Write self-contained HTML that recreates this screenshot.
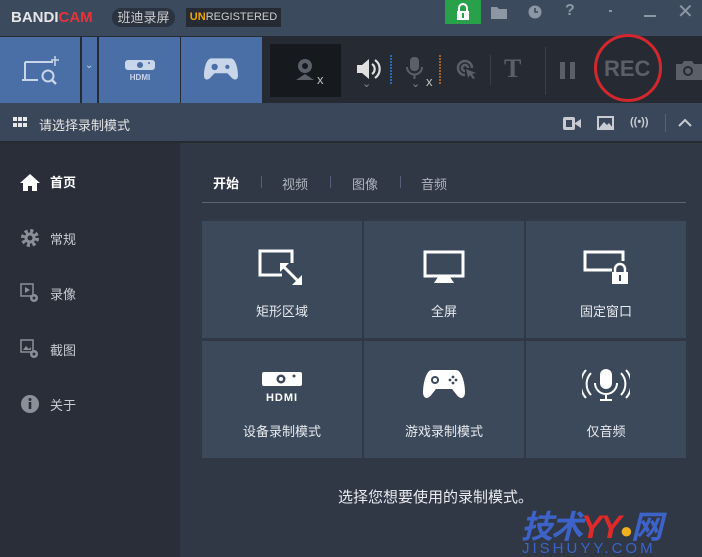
<!DOCTYPE html>
<html><head><meta charset="utf-8"><style>
*{margin:0;padding:0;box-sizing:border-box}
body{width:702px;height:557px;overflow:hidden;background:#303745;font-family:"Liberation Sans","Noto Sans CJK SC",sans-serif;position:relative;color:#fff}
.a{position:absolute}
.tile{position:absolute;background:#3c495b;width:160px;height:117px;text-align:center;font-size:13px;color:#e8ebef}
.tile svg{position:absolute;left:50%;transform:translateX(-50%);top:28px}
.tile span{position:absolute;left:0;right:0;top:80px}
.nav{position:absolute;left:20px;font-size:13px;color:#c8ccd2;display:flex;align-items:center}
.nav svg{margin-right:10px}
</style></head><body>
<div class="a" style="left:0;top:0;width:702px;height:36px;background:#3c4a5e"></div>
<div class="a" style="left:11px;top:9px;font-weight:bold;font-size:15px;color:#e6e6e6">BANDI<span style="color:#e8333a">CAM</span></div>
<div class="a" style="left:112px;top:8px;width:63px;height:19px;border-radius:9px;background:#2c3340;color:#ccc;font-size:13px;text-align:center;line-height:19px">班迪录屏</div>
<div class="a" style="left:186px;top:8px;width:95px;height:19px;background:#262b33;font-size:11px;line-height:19px;text-align:center;color:#ccc"><b style="color:#f0a500">UN</b>REGISTERED</div>
<div class="a" style="left:445px;top:0;width:36px;height:24px;background:#28a14a"></div>
<svg class="a" style="left:454px;top:3px" width="18" height="18" viewBox="0 0 18 18"><path d="M5 8V5a4 4 0 0 1 8 0v3" stroke="#fff" stroke-width="2" fill="none"/><rect x="3" y="8" width="12" height="9" fill="#fff"/><rect x="8" y="10" width="2" height="5" fill="#28a14a"/></svg>
<svg class="a" style="left:491px;top:6px" width="16" height="13"><path d="M0 1h6l2 2h8v10H0z" fill="#8d96a3"/></svg>
<svg class="a" style="left:528px;top:5px" width="14" height="14"><circle cx="7" cy="7" r="6.5" fill="#8d96a3"/><path d="M7 3v4h3" stroke="#3c4a5e" stroke-width="1.6" fill="none"/></svg>
<div class="a" style="left:565px;top:2px;font-size:16px;color:#8d96a3;font-weight:bold">?</div>
<div class="a" style="left:609px;top:10px;width:3px;height:2px;background:#8d96a3"></div>
<div class="a" style="left:644px;top:15px;width:12px;height:2px;background:#8d96a3"></div>
<div class="a" style="left:677px;top:-1px;font-size:20px;color:#8d96a3">✕</div>
<div class="a" style="left:0;top:36px;width:702px;height:67px;background:#262b33"></div>
<div class="a" style="left:0;top:37px;width:80px;height:66px;background:#4a6ea6"></div>
<div class="a" style="left:82px;top:37px;width:15px;height:66px;background:#4a6ea6"></div>
<div class="a" style="left:99px;top:37px;width:81px;height:66px;background:#4a6ea6"></div>
<div class="a" style="left:181px;top:37px;width:81px;height:66px;background:#4a6ea6"></div>
<svg class="a" style="left:22px;top:56px" width="38" height="30" viewBox="0 0 38 30"><path d="M3 6h28M3 6v18M0 24h16" stroke="#c9d5e8" stroke-width="2" fill="none"/><path d="M33 0v10M29 4h8" stroke="#c9d5e8" stroke-width="1.5"/><circle cx="26" cy="20" r="5.5" stroke="#c9d5e8" stroke-width="2" fill="none"/><path d="M30 24l4 4" stroke="#c9d5e8" stroke-width="2.5"/></svg>
<div class="a" style="left:85px;top:60px;color:#c9d5e8;font-size:10px">⌄</div>
<svg class="a" style="left:124px;top:59px" width="32" height="22"><rect x="1" y="1" width="30" height="10" rx="3" fill="#c9d5e8"/><circle cx="16" cy="6" r="3" fill="#4a6ea6"/><circle cx="25" cy="4" r="1" fill="#4a6ea6"/><text x="16" y="21" font-size="8" font-weight="bold" text-anchor="middle" fill="#c9d5e8" font-family="Liberation Sans">HDMI</text></svg>
<svg class="a" style="left:204px;top:57px" width="34" height="24" viewBox="0 0 32 22"><path d="M7 1h18c5 0 7 10 7 16 0 5-4 5-7 1l-3-3H10l-3 3c-3 4-7 4-7-1C0 11 2 1 7 1z" fill="#c9d5e8"/><circle cx="10" cy="9" r="3" fill="#4a6ea6"/><circle cx="22" cy="9" r="2" fill="#4a6ea6"/></svg>
<div class="a" style="left:270px;top:44px;width:71px;height:53px;background:#16191e"></div>
<svg class="a" style="left:293px;top:56px" width="40" height="30"><circle cx="12" cy="10" r="7" fill="#5b6068"/><circle cx="12" cy="10" r="3" fill="#16191e"/><path d="M3 24l9-6 9 6z" fill="#5b6068"/><text x="24" y="28" font-size="13" fill="#c0c0c0" font-family="Liberation Sans">x</text></svg>
<svg class="a" style="left:356px;top:57px" width="26" height="24"><path d="M1 8h5l7-6v20l-7-6H1z" fill="#e0e0e0"/><path d="M16 7a6 6 0 0 1 0 10M19 3a11 11 0 0 1 0 18" stroke="#e0e0e0" stroke-width="2.2" fill="none"/></svg>
<div class="a" style="left:362px;top:77px;color:#888;font-size:11px">⌄</div>
<div class="a" style="left:390px;top:55px;width:2px;height:30px;background:repeating-linear-gradient(#2a6ab0 0 2px,transparent 2px 3px)"></div>
<svg class="a" style="left:405px;top:57px" width="36" height="30"><rect x="5" y="0" width="9" height="14" rx="4" fill="#5b6068"/><path d="M2 10a7.5 7.5 0 0 0 15 0M9.5 18v4" stroke="#5b6068" stroke-width="2" fill="none"/><text x="21" y="29" font-size="13" fill="#c0c0c0" font-family="Liberation Sans">x</text></svg>
<div class="a" style="left:411px;top:77px;color:#888;font-size:11px">⌄</div>
<div class="a" style="left:439px;top:55px;width:2px;height:30px;background:repeating-linear-gradient(#a0602a 0 2px,transparent 2px 3px)"></div>
<svg class="a" style="left:456px;top:59px" width="22" height="22"><path d="M9 16A7 7 0 1 1 16 9M9 12a3 3 0 1 1 3-3" stroke="#5b6068" stroke-width="2.5" fill="none"/><path d="M10 10l10 4-4 1 3 4-2 1-3-4-2 3z" fill="#5b6068"/></svg>
<div class="a" style="left:490px;top:55px;width:1px;height:30px;background:#3a3f47"></div>
<div class="a" style="left:504px;top:54px;font-family:'Liberation Serif',serif;font-weight:bold;font-size:26px;color:#5b6068">T</div>
<div class="a" style="left:545px;top:47px;width:1px;height:48px;background:#3a3f47"></div>
<div class="a" style="left:560px;top:62px;width:5px;height:17px;background:#5b6068"></div>
<div class="a" style="left:570px;top:62px;width:5px;height:17px;background:#5b6068"></div>
<div class="a" style="left:594px;top:34px;width:68px;height:68px;border:3px solid #d2282d;border-radius:50%"></div>
<div class="a" style="left:604px;top:56px;font-weight:bold;font-size:22px;color:#5b6068">REC</div>
<svg class="a" style="left:676px;top:60px" width="26" height="20"><path d="M0 4h6l2-3h8l2 3h8v16H0z" fill="#5b6068"/><circle cx="12" cy="11" r="5" fill="#262b33"/><circle cx="12" cy="11" r="3" fill="#5b6068"/></svg>
<div class="a" style="left:0;top:103px;width:702px;height:38px;background:#3a4659"></div>
<svg class="a" style="left:13px;top:117px" width="15" height="11"><g fill="#e8e8e8"><rect x="0" y="0" width="4" height="4"/><rect x="5" y="0" width="4" height="4"/><rect x="10" y="0" width="4" height="4"/><rect x="0" y="6" width="4" height="4"/><rect x="5" y="6" width="4" height="4"/><rect x="10" y="6" width="4" height="4"/></g></svg>
<div class="a" style="left:39px;top:115px;font-size:13px;color:#e6e6e6">请选择录制模式</div>
<svg class="a" style="left:563px;top:117px" width="18" height="13"><rect x="0" y="0" width="12" height="13" rx="2" fill="#c8ccd2"/><rect x="3" y="3" width="6" height="7" fill="#3a4659"/><path d="M12 6l6-4v9l-6-4z" fill="#c8ccd2"/></svg>
<svg class="a" style="left:597px;top:116px" width="17" height="14"><rect x="1" y="1" width="15" height="12" stroke="#c8ccd2" stroke-width="2" fill="none"/><path d="M2 12l5-6 3 3 2-2 4 5z" fill="#c8ccd2"/></svg>
<div class="a" style="left:630px;top:116px;font-size:11px;color:#c8ccd2;font-weight:bold">((•))</div>
<div class="a" style="left:665px;top:114px;width:1px;height:18px;background:#56627a"></div>
<svg class="a" style="left:678px;top:118px" width="14" height="9"><path d="M1 8l6-6 6 6" stroke="#c8ccd2" stroke-width="2" fill="none"/></svg>
<div class="a" style="left:0;top:141px;width:702px;height:2px;background:#252a33"></div>
<div class="a" style="left:0;top:143px;width:180px;height:414px;background:#292e39"></div>
<div class="nav" style="top:172px;color:#fff;font-weight:bold"><svg width="20" height="18"><path d="M10 1L0 10h3v8h5v-5h4v5h5v-8h3z" fill="#fff"/></svg>首页</div>
<div class="nav" style="top:228px"><svg width="20" height="20" viewBox="0 0 20 20"><circle cx="10" cy="10" r="7" fill="none" stroke="#8b9098" stroke-width="4" stroke-dasharray="3 2.5"/><circle cx="10" cy="10" r="5.5" fill="#8b9098"/><circle cx="10" cy="10" r="2.5" fill="#292e39"/></svg>常规</div>
<div class="nav" style="top:283px"><svg width="20" height="20"><rect x="1" y="1" width="12" height="12" stroke="#8b9098" fill="none" stroke-width="1.5"/><path d="M5 4l5 3-5 3z" fill="#8b9098"/><circle cx="14" cy="15" r="4" fill="#8b9098"/><circle cx="14" cy="15" r="1.5" fill="#292e39"/></svg>录像</div>
<div class="nav" style="top:339px"><svg width="20" height="20"><rect x="1" y="1" width="12" height="12" stroke="#8b9098" fill="none" stroke-width="1.5"/><path d="M3 11l3-4 3 3 2-2v3z" fill="#8b9098"/><circle cx="14" cy="15" r="4" fill="#8b9098"/><circle cx="14" cy="15" r="1.5" fill="#292e39"/></svg>截图</div>
<div class="nav" style="top:394px"><svg width="20" height="20"><circle cx="10" cy="10" r="9" fill="#8b9098"/><rect x="8.7" y="8" width="2.6" height="7" fill="#292e39"/><circle cx="10" cy="5.5" r="1.5" fill="#292e39"/></svg>关于</div>
<div class="a" style="left:213px;top:173px;font-size:13px;font-weight:bold;color:#fff">开始</div>
<div class="a" style="left:261px;top:176px;width:1px;height:12px;background:#56607a"></div>
<div class="a" style="left:282px;top:174px;font-size:13px;color:#b0b5bd">视频</div>
<div class="a" style="left:330px;top:176px;width:1px;height:12px;background:#56607a"></div>
<div class="a" style="left:352px;top:174px;font-size:13px;color:#b0b5bd">图像</div>
<div class="a" style="left:400px;top:176px;width:1px;height:12px;background:#56607a"></div>
<div class="a" style="left:421px;top:174px;font-size:13px;color:#b0b5bd">音频</div>
<div class="a" style="left:202px;top:202px;width:484px;height:1px;background:#5a6474"></div>
<div class="tile" style="left:202px;top:221px"><svg width="48" height="36" viewBox="0 0 48 36"><path d="M34 14V2H2v24h22" stroke="#fff" stroke-width="3" fill="none"/><path d="M24 16l16 16" stroke="#fff" stroke-width="3"/><path d="M22 14h9l-9 9zM44 36h-10l10-10z" fill="#fff"/></svg><span>矩形区域</span></div>
<div class="tile" style="left:364px;top:221px"><svg width="44" height="36"><rect x="3" y="3" width="38" height="24" stroke="#fff" stroke-width="3" fill="none"/><path d="M16 28h12l4 6H12z" fill="#fff"/></svg><span>全屏</span></div>
<div class="tile" style="left:526px;top:221px"><svg width="48" height="36"><path d="M30 21H3V3h38v9" stroke="#fff" stroke-width="3" fill="none"/><path d="M33 24v-4a5 5 0 0 1 10 0v4" stroke="#fff" stroke-width="2.5" fill="none"/><rect x="30" y="23" width="16" height="12" fill="#fff"/><rect x="37" y="26" width="2" height="6" fill="#3c495b"/></svg><span>固定窗口</span></div>
<div class="tile" style="left:202px;top:341px"><svg width="44" height="32" style="top:30px"><rect x="2" y="1" width="40" height="14" rx="2" fill="#fff"/><circle cx="21" cy="8" r="4.5" fill="#3c495b"/><circle cx="21" cy="8" r="2" fill="#fff"/><circle cx="34" cy="5" r="1.5" fill="#3c495b"/><text x="22" y="30" font-size="11" font-weight="bold" text-anchor="middle" fill="#fff" font-family="Liberation Sans" letter-spacing="1">HDMI</text></svg><span>设备录制模式</span></div>
<div class="tile" style="left:364px;top:341px"><svg width="42" height="30" viewBox="0 0 42 30"><path d="M9 1h24c6 0 9 14 9 22 0 7-5 8-9 2l-4-5H13l-4 5c-4 6-9 5-9-2C0 15 3 1 9 1z" fill="#fff"/><circle cx="12" cy="11" r="4" fill="#3c495b"/><circle cx="12" cy="11" r="2" fill="#fff"/><g fill="#3c495b"><circle cx="30" cy="8" r="1.4"/><circle cx="30" cy="14" r="1.4"/><circle cx="27" cy="11" r="1.4"/><circle cx="33" cy="11" r="1.4"/></g></svg><span>游戏录制模式</span></div>
<div class="tile" style="left:526px;top:341px"><svg width="48" height="32"><rect x="18" y="0" width="12" height="20" rx="6" fill="#fff"/><path d="M13 14a11 11 0 0 0 22 0M24 25v5M18 31h12" stroke="#fff" stroke-width="2" fill="none"/><path d="M9 4a16 16 0 0 0 0 22M4 1a21 21 0 0 0 0 28M39 4a16 16 0 0 1 0 22M44 1a21 21 0 0 1 0 28" stroke="#fff" stroke-width="2" fill="none"/></svg><span>仅音频</span></div>
<div class="a" style="left:338px;top:486px;font-size:15px;color:#e8ebef">选择您想要使用的录制模式。</div>
<div class="a" style="left:521px;top:502px;font-size:32px;font-style:italic;color:#3d63c8;font-weight:bold;letter-spacing:-2px">技术<span style="color:#e02a2a">YY</span><span style="color:#f0b020;font-size:22px">●</span>网</div>
<div class="a" style="left:522px;top:540px;font-size:15px;color:#3d63c8;letter-spacing:3px">JISHUYY.COM</div>
</body></html>
